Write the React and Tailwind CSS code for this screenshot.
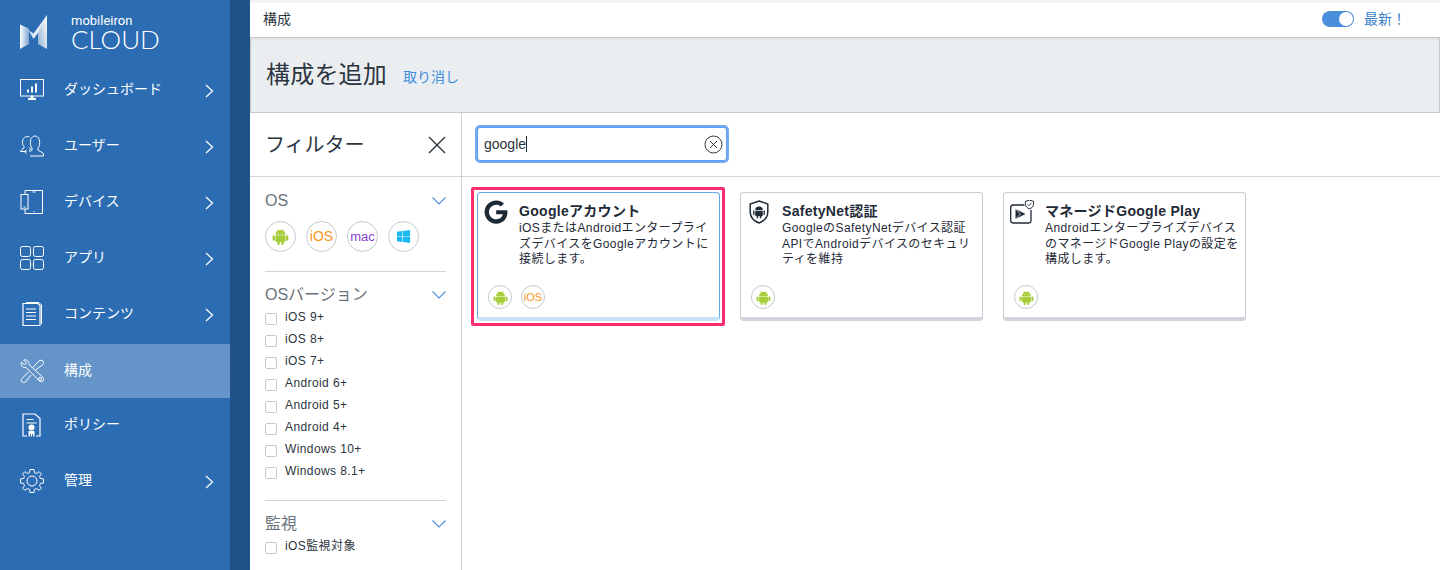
import { FaGoogle, FaWindows } from 'react-icons/fa';

const FONT = '[font-family:"Liberation_Sans","Noto_Sans_CJK_JP",sans-serif]';

// sidebar icons, 24px box, white outline
function DashIcon() {
  return (
    <svg width="24" height="22" viewBox="0 0 24 22" fill="none" stroke="white" strokeWidth="1">
      <rect x="0.5" y="0.5" width="23" height="16.5" />
      <path d="M8 13.500v-3M12 13.500v-6M16 13.500v-9" strokeWidth="2" />
      <path d="M8 20h8" strokeWidth="2" />
      <path d="M11 17h2v2h-2z" fill="white" />
    </svg>
  );
}
function UsersIcon() {
  return (
    <svg width="24" height="22" viewBox="0 0 24 22" fill="none" stroke="white" strokeWidth="1">
      <path d="M10 21h13.500v-2c0-2-5-2.500-5.500-4v-2c1-1 1.700-3 1.700-5.500C19.700 3.500 17.500 1 15 1s-4.700 2.500-4.700 6.500c0 2.500.7 4.500 1.700 5.500v2c-.2.7-1.200 1.200-2.300 1.600" />
      <path d="M9.500 2C5 .5 2.500 3.500 2.500 7c0 2 .5 3.500 1.500 4.500v1.500C3 14 1 14.500.5 16.500h6" />
      <path d="M6.500 15l-2 1.700 2 1.800M9 12.500l1.800 1.800L9 16" />
    </svg>
  );
}
function DeviceIcon() {
  return (
    <svg width="24" height="24" viewBox="0 0 24 24" fill="none" stroke="white" strokeWidth="1">
      <path d="M5 4V.5h17.500v23H5V19" />
      <rect x="1" y="4.500" width="7" height="14.500" />
      <path d="M12.500 2h3M13.500 21.500h1M3.500 17h2" />
    </svg>
  );
}
function AppsIcon() {
  return (
    <svg width="24" height="24" viewBox="0 0 24 24" fill="none" stroke="white" strokeWidth="1">
      <rect x="0.500" y="0.500" width="10" height="10" rx="2" />
      <rect x="13.500" y="0.500" width="10" height="10" rx="2" />
      <rect x="0.500" y="13.500" width="10" height="10" rx="2" />
      <rect x="13.500" y="13.500" width="10" height="10" rx="2" />
    </svg>
  );
}
function ContentIcon() {
  return (
    <svg width="20" height="24" viewBox="0 0 20 24" fill="none" stroke="white" strokeWidth="1">
      <path d="M1 1.500h15l2 2v20H1z" strokeWidth="1.200" />
      <path d="M4 7h10M4 10.500h10M4 14h10M4 17.500h10" />
      <path d="M4 .5h13l2.500 2.500v19" />
    </svg>
  );
}
function ToolsIcon() {
  return (
    <svg width="24" height="24" viewBox="0 0 24 24" fill="none" stroke="white" strokeWidth="1">
      <path d="M3.500 1L6.500 4 4.500 6 1.500 3C.5 6 2.500 9 6 8.500L18 20.500c1 1.500 3.500 3 5 1.500s.5-3.500-1-4.500L9 5.500C9.500 3 7 0 3.500 1z" />
      <circle cx="20" cy="20" r="1.500" />
      <path d="M13 8.500L19 2c1-1 3-1 4 0s1 3 0 3.500L15.500 11M8.500 13L2 19.500c-1 1.500-1 2.500 0 3.500s2.500 1 3.500 0L11 16" />
    </svg>
  );
}
function PolicyIcon() {
  return (
    <svg width="20" height="24" viewBox="0 0 20 24" fill="none" stroke="white" strokeWidth="1">
      <path d="M5 23H1V1h12l5 4.500V23h-4" strokeWidth="1.200" />
      <path d="M4.500 6.500h7M4.500 10h10" />
      <circle cx="9.500" cy="14.500" r="3" fill="white" stroke="none" />
      <path d="M6.500 18h6v5.500h-1.500v-2.500h-1v2.500h-1v-2.500h-1v2.500H6.500z" fill="white" stroke="none" />
    </svg>
  );
}
function GearIcon() {
  return (
    <svg width="24" height="24" viewBox="0 0 24 24" fill="none" stroke="white" strokeWidth="1">
      <circle cx="12" cy="12" r="5" />
      <path d="M10 .5h4l.5 3.200 2 .8L19.200 2.700l2.100 2.100-1.800 2.700.9 2 3.100.5v4l-3.100.5-.9 2 1.800 2.700-2.100 2.100-2.700-1.800-2 .8-.5 3.200h-4l-.5-3.200-2-.8-2.700 1.800-2.100-2.100 1.800-2.700-.9-2L.5 14v-4l3.100-.5.900-2L2.700 4.800l2.100-2.100 2.700 1.800 2-.8z" strokeLinejoin="round" />
    </svg>
  );
}

function Chevron() {
  return (
    <svg width="9" height="14" viewBox="0 0 9 14" fill="none" stroke="white" strokeWidth="1.200">
      <path d="M1 1l6.500 6L1 13" />
    </svg>
  );
}

function ChevronDown() {
  return (
    <svg width="14" height="8" viewBox="0 0 14 8" fill="none" stroke="#4a90d9" strokeWidth="1.100">
      <path d="M.5 .5L7 7l6.500-6.500" />
    </svg>
  );
}

function Android({ size = 16 }) {
  return (
    <svg width={size} height={size} viewBox="0 0 16 16" fill="#a5cd39">
      <path d="M3.300 6.300a4.700 4.500 0 0 1 9.400 0z" />
      <path d="M5 1l1.200 2M11 1L9.800 3" stroke="#a5cd39" strokeWidth=".7" />
      <rect x="3.300" y="6.800" width="9.400" height="6.400" rx="1" />
      <rect x=".6" y="6.800" width="2.200" height="5.200" rx="1.100" />
      <rect x="13.200" y="6.800" width="2.200" height="5.200" rx="1.100" />
      <rect x="5" y="12" width="2.300" height="4" rx="1.100" />
      <rect x="8.700" y="12" width="2.300" height="4" rx="1.100" />
      <circle cx="6.200" cy="4.700" r=".45" fill="white" />
      <circle cx="9.800" cy="4.700" r=".45" fill="white" />
    </svg>
  );
}

function Logo() {
  return (
    <div className="flex items-start h-[62px] pl-5 pt-[15px] shrink-0">
      <svg width="27" height="34" viewBox="0 0 27 34" className="shrink-0">
        <defs>
          <linearGradient id="lw" x1="0" y1="0" x2="1" y2="0">
            <stop offset="0" stopColor="#ffffff" />
            <stop offset="1" stopColor="#7fa6cf" />
          </linearGradient>
          <linearGradient id="rw" x1="1" y1="0" x2="0" y2="0.6">
            <stop offset="0" stopColor="#ffffff" />
            <stop offset="1" stopColor="#9dbbd9" />
          </linearGradient>
        </defs>
        <path d="M0 9.500L9 13.500V29L0 34z" fill="url(#lw)" />
        <path d="M27 0V34L18 29V14z" fill="url(#rw)" />
        <path d="M0 9.500L13.500 18.500 27 0 18 18 13.500 24 9 16z" fill="#dfe9f3" />
      </svg>
      <div className="ml-6 -mt-[1px] text-white">
        <div className="text-[13px] leading-[13px] font-normal [font-family:Roboto,sans-serif]">mobileiron</div>
        <div className="text-[26px] leading-[25px] font-light [font-family:Lato,sans-serif]">CLOUD</div>
      </div>
    </div>
  );
}

function NavItem({ icon, label, arrow = true, className = 'h-14', active = false }) {
  return (
    <div className={`flex items-center pl-5 shrink-0 ${className} ${active ? 'bg-[#6494c8]' : ''}`}>
      <span className="w-6 h-6 flex items-center justify-center shrink-0">{icon}</span>
      <span className="ml-5 text-sm text-white -mt-[2px]">{label}</span>
      {arrow && <span className="ml-auto mr-[16px] mt-[2px] flex"><Chevron /></span>}
    </div>
  );
}

function Sidebar() {
  return (
    <aside className="w-[230px] shrink-0 bg-[#2b6cb2] flex flex-col">
      <Logo />
      <NavItem icon={<DashIcon />} label="ダッシュボード" />
      <NavItem icon={<UsersIcon />} label="ユーザー" />
      <NavItem icon={<DeviceIcon />} label="デバイス" />
      <NavItem icon={<AppsIcon />} label="アプリ" />
      <NavItem icon={<ContentIcon />} label="コンテンツ" />
      <NavItem icon={<ToolsIcon />} label="構成" arrow={false} active className="h-[54px] mt-[2px]" />
      <NavItem icon={<PolicyIcon />} label="ポリシー" arrow={false} className="h-[54px]" />
      <NavItem icon={<GearIcon />} label="管理" className="h-[54px] mt-[2px]" />
    </aside>
  );
}

function OsCircle({ children, small = false }) {
  return (
    <span className={`flex items-center justify-center rounded-full bg-white border border-[#c3cad0] shrink-0 ${small ? 'w-6 h-6' : 'w-[31px] h-[31px]'}`}>
      {children}
    </span>
  );
}

function Check({ label }) {
  return (
    <div className="flex items-center h-[22px]">
      <span className="w-3 h-3 mt-[4px] rounded-[2px] border border-[#c4c8cc] bg-white shrink-0" />
      <span className="ml-2 text-xs text-[#2c3540] tracking-[0.4px] -mt-[1px]">{label}</span>
    </div>
  );
}

function FilterHead({ label }) {
  return (
    <div className="flex items-center justify-between h-6">
      <span className="text-base text-[#6a727b]">{label}</span>
      <ChevronDown />
    </div>
  );
}

function FilterPanel() {
  return (
    <div className="w-[212px] shrink-0 border-r border-[#d0d0d0] flex flex-col">
      <div className="h-[64px] shrink-0 border-b border-[#d5d5d5] flex items-center justify-between pl-[15px] pr-[15px]">
        <span className="text-xl text-[#2c3540]">フィルター</span>
        <svg width="18" height="18" viewBox="0 0 18 18" stroke="#2c3540" strokeWidth="1.400"><path d="M1 1l16 16M17 1L1 17" /></svg>
      </div>
      <div className="px-[15px] pt-[12px]">
        <FilterHead label="OS" />
        <div className="flex gap-[10px] mt-[8px]">
          <OsCircle><Android size={17} /></OsCircle>
          <OsCircle><span className="text-[14px] text-[#f7941d]">iOS</span></OsCircle>
          <OsCircle><span className="text-[13px] text-[#8a3fd1]">mac</span></OsCircle>
          <OsCircle><FaWindows className="text-[#1ab7f0] text-[15px]" /></OsCircle>
        </div>
        <div className="border-t border-[#d0d5da] mt-[19px] pt-[11px]">
          <FilterHead label="OSバージョン" />
        </div>
        <div className="-mt-[1px]">
          {['iOS 9+', 'iOS 8+', 'iOS 7+', 'Android 6+', 'Android 5+', 'Android 4+', 'Windows 10+', 'Windows 8.1+'].map((v) => (
            <Check key={v} label={v} />
          ))}
        </div>
        <div className="border-t border-[#d0d5da] mt-[18px] pt-[11px]">
          <FilterHead label="監視" />
        </div>
        <div className="-mt-[1px]"><Check label="iOS監視対象" /></div>
      </div>
    </div>
  );
}

function SafetyIcon() {
  return (
    <svg width="20" height="24" viewBox="0 0 20 24">
      <path d="M10 1l8.800 3v8c0 5-3.800 9-8.800 11C5 21 1.200 17 1.200 12V4z" fill="none" stroke="#1f2a37" strokeWidth="1.500" />
      <path d="M6.200 10a3.800 3.600 0 0 1 7.600 0z" fill="#1f2a37" />
      <path d="M6.200 10.800h7.600v4.400a1 1 0 0 1-1 1h-.5v2h-1.400v-2H9.100v2H7.700v-2h-.5a1 1 0 0 1-1-1z" fill="#1f2a37" />
      <path d="M4.800 10.800v3.800M15.200 10.800v3.800" stroke="#1f2a37" strokeWidth="1.300" strokeLinecap="round" />
    </svg>
  );
}

function PlayIcon() {
  return (
    <svg width="24" height="24" viewBox="0 0 24 24">
      <path d="M14.500 5H3A2.500 2.500 0 0 0 .7 7.500v13A2.500 2.500 0 0 0 3 23h15.500a2.500 2.500 0 0 0 2.500-2.500V10" fill="none" stroke="#1f2a37" strokeWidth="1.300" />
      <path d="M5.500 9l10 5-10 5z" fill="#1f2a37" />
      <path d="M5.500 9l5 5-5 5" fill="none" stroke="white" strokeWidth=".7" />
      <path d="M19.500 0l4 1.400v3c0 2-1.700 3.600-4 4.600-2.300-1-4-2.600-4-4.600v-3z" fill="white" stroke="#1f2a37" strokeWidth="1" />
      <path d="M17.800 4.300l1.300 1.300 2.300-2.500" fill="none" stroke="#1f2a37" strokeWidth=".9" />
    </svg>
  );
}

function Card({ icon, title, desc, ios = false, selected = false }) {
  return (
    <div className={`relative w-[243px] h-[129px] shrink-0 rounded-[4px] bg-white border border-b-[4px] ${selected ? 'border-[#62a8ea] border-b-[#c8e2f9]' : 'border-[#c6ccd2] border-b-[#cfd5da]'}`}>
      <div className="flex pt-[7px] pl-[6px] pr-[6px]">
        <span className="w-6 h-6 shrink-0 flex items-center justify-center">{icon}</span>
        <div className="ml-[11px] min-w-0 text-[#1f2a37]">
          <div className="text-sm font-bold leading-[16px] mt-[3px] tracking-[0.3px]">{title}</div>
          <p className="text-xs leading-[15.5px] mt-[2px] tracking-[0.4px]">{desc}</p>
        </div>
      </div>
      <div className="absolute left-[10px] top-[92px] flex gap-[9px]">
        <OsCircle small><Android size={15} /></OsCircle>
        {ios && <OsCircle small><span className="text-[11px] text-[#f7941d]">iOS</span></OsCircle>}
      </div>
      {selected && <div className="absolute -left-[7px] -right-[6px] -top-[6px] -bottom-[9px] border-[3px] border-[#fb2d6d] rounded-[2px]" />}
    </div>
  );
}

function Results() {
  return (
    <div className="flex-1 min-w-0 flex flex-col">
      <div className="h-[64px] shrink-0 border-b border-[#d5d5d5] pl-[15px] pt-[14px]">
        <div className="w-[250px] h-[34px] rounded-[3px] border border-[#5d9cf2] shadow-[0_0_0_2px_rgba(93,156,242,0.85)] bg-white flex items-center pl-[6px] pr-[3px]">
          <span className="text-sm text-[#2c3540]">google</span>
          <span className="w-px h-4 bg-[#1f2a37]" />
          <svg className="ml-auto" width="19" height="19" viewBox="0 0 19 19" fill="none" stroke="#2c3540" strokeWidth="1">
            <circle cx="9.500" cy="9.500" r="8.500" />
            <path d="M6 6l7 7M13 6l-7 7" />
          </svg>
        </div>
      </div>
      <div className="flex gap-5 pl-[15px] pt-[15px]">
        <Card
          selected
          ios
          icon={<FaGoogle className="text-[#1f2a37] text-[24px]" />}
          title="Googleアカウント"
          desc="iOSまたはAndroidエンタープライズデバイスをGoogleアカウントに接続します。"
        />
        <Card
          icon={<SafetyIcon />}
          title="SafetyNet認証"
          desc="GoogleのSafetyNetデバイス認証APIでAndroidデバイスのセキュリティを維持"
        />
        <Card
          icon={<PlayIcon />}
          title="マネージドGoogle Play"
          desc="AndroidエンタープライズデバイスのマネージドGoogle Playの設定を構成します。"
        />
      </div>
    </div>
  );
}

export default function App() {
  return (
    <div className={`flex h-[570px] w-[1440px] overflow-hidden bg-white ${FONT}`}>
      <Sidebar />
      <div className="w-5 shrink-0 bg-[#1f5288]" />
      <main className="flex-1 min-w-0 flex flex-col">
        <div className="h-[3px] bg-[#f3f3f3] shrink-0" />
        <div className="h-[34px] shrink-0 flex items-center pl-[13px] pr-[34px] pb-[3px] bg-white">
          <span className="text-sm text-[#2c3540]">構成</span>
          <span className="ml-auto w-8 h-4 rounded-full bg-[#4a8fdc] flex items-center justify-end pr-[1px]">
            <span className="w-[14px] h-[14px] rounded-full bg-white" />
          </span>
          <span className="ml-[10px] text-sm text-[#3f83c9]">最新！</span>
        </div>
        <div className="h-[76px] shrink-0 bg-[#ebeef1] border border-[#c8c8c8] shadow-[inset_0_2px_2px_rgba(0,0,0,0.05)] flex items-center pl-[15px]">
          <span className="text-[24px] text-[#2c3540] tracking-[0.2px]">構成を追加</span>
          <span className="ml-4 text-sm text-[#3f8fdc] mt-[3px]">取り消し</span>
        </div>
        <div className="flex-1 min-h-0 flex">
          <FilterPanel />
          <Results />
        </div>
      </main>
    </div>
  );
}
